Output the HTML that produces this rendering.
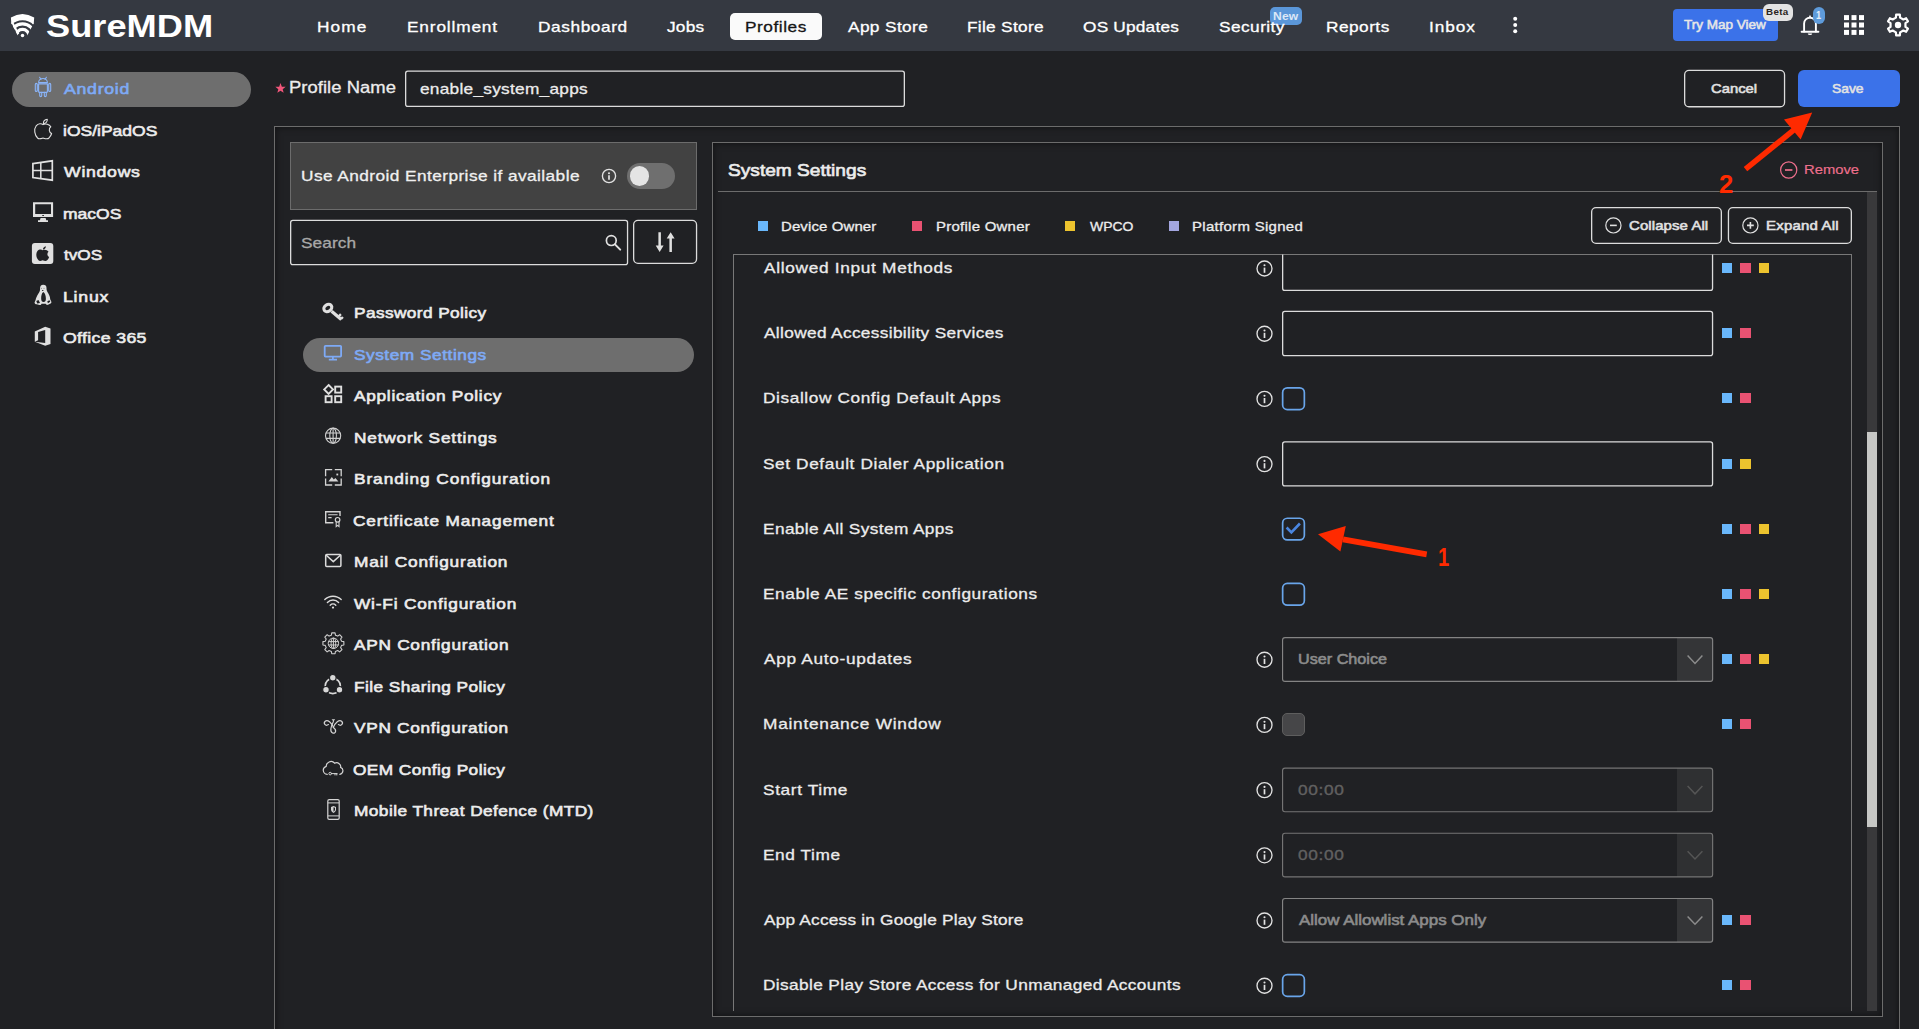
<!DOCTYPE html>
<html lang="en">
<head>
<meta charset="utf-8">
<title>SureMDM - Profiles</title>
<style>
html,body{margin:0;padding:0;}
body{width:1919px;height:1029px;overflow:hidden;position:relative;background:#202124;font-family:"Liberation Sans",sans-serif;}
.t{position:absolute;white-space:pre;line-height:20px;transform-origin:0 50%;display:block;}
.b{position:absolute;box-sizing:border-box;}
.hdr{left:0;top:0;width:1919px;height:51px;background:#353941;}
.pill{background:#6e6e6e;border-radius:18px;}
.blue{background:#3b72e9;}
.ob{border:1px solid #dcdcdc;}
.pan{border:1px solid #6c6c6c;box-shadow:inset 0 0 7px rgba(0,0,0,.55);}
.inp{border:1px solid #dedede;border-radius:3px;}
.sel{border:1px solid #8a8a8a;border-radius:3px;}
.sel i{position:absolute;right:0;top:0;bottom:0;width:35px;background:#343537;}
.sel.dis{border-color:#7a7a7a;}
.cb{width:23px;height:23px;border:1.5px solid #69a5ea;border-radius:5px;}
.cbd{width:23px;height:23px;border:1px solid #5e5e5e;border-radius:5px;background:#464648;}
.sq{position:absolute;width:10px;height:10px;}
.cB{background:#69b7fb;}.cP{background:#e95272;}.cY{background:#ecc32e;}.cV{background:#a3a6e0;}
svg{position:absolute;left:0;top:0;pointer-events:none;}
</style>
</head>
<body>
<div class="b hdr" style="left:0px;top:0px;width:1919px;height:51px;"></div>
<div class="b " style="left:730px;top:13px;width:92px;height:27px;background:#fafafa;border-radius:5px;"></div>
<div class="b " style="left:1269.5px;top:7px;width:32.5px;height:17.5px;background:#5b97d9;border-radius:5px;"></div>
<div class="b blue" style="left:1673px;top:9px;width:105px;height:32px;border-radius:4px;"></div>
<div class="b " style="left:1763px;top:4px;width:30px;height:16.8px;background:#e3e3e3;border-radius:6px;"></div>
<div class="b pill" style="left:12px;top:72px;width:239px;height:35px;"></div>
<div class="b blue" style="left:1798px;top:70px;width:102px;height:37px;border-radius:6px;"></div>
<div class="b pan" style="left:274px;top:126px;width:1626px;height:920px;"></div>
<div class="b " style="left:290px;top:142px;width:407px;height:68px;background:#424242;border:1px solid #6c6c6c;"></div>
<div class="b " style="left:627px;top:163px;width:48px;height:26px;background:#6f6f6f;border-radius:13px;"></div>
<div class="b " style="left:629.8px;top:166.2px;width:19.6px;height:19.6px;background:#e4e4e4;border-radius:50%;"></div>
<div class="b pill" style="left:303px;top:338px;width:391px;height:34px;"></div>
<div class="b pan" style="left:712px;top:142px;width:1171px;height:875px;"></div>
<div class="b " style="left:718px;top:191px;width:1159px;height:1px;background:#6c6c6c;"></div>
<div class="b " style="left:1867px;top:192px;width:10px;height:819px;background:#39393b;"></div>
<div class="b " style="left:1867px;top:432px;width:10px;height:395px;background:#c6c7c5;"></div>
<div class="sq cB" style="left:758px;top:221px"></div>
<div class="sq cP" style="left:912px;top:221px"></div>
<div class="sq cY" style="left:1065px;top:221px"></div>
<div class="sq cV" style="left:1168.5px;top:221px"></div>
<div class="b " style="left:733px;top:254px;width:1119px;height:757px;border:1px solid #787878;border-bottom:none;"></div>
<div class="sq cB" style="left:1722px;top:263px;width:10px"></div>
<div class="sq cP" style="left:1740px;top:263px;width:11px"></div>
<div class="sq cY" style="left:1759px;top:263px;width:10px"></div>
<div class="sq cB" style="left:1722px;top:328px;width:10px"></div>
<div class="sq cP" style="left:1740px;top:328px;width:11px"></div>
<div class="sq cB" style="left:1722px;top:393px;width:10px"></div>
<div class="sq cP" style="left:1740px;top:393px;width:11px"></div>
<div class="sq cB" style="left:1722px;top:459px;width:10px"></div>
<div class="sq cY" style="left:1740px;top:459px;width:11px"></div>
<div class="sq cB" style="left:1722px;top:524px;width:10px"></div>
<div class="sq cP" style="left:1740px;top:524px;width:11px"></div>
<div class="sq cY" style="left:1759px;top:524px;width:10px"></div>
<div class="sq cB" style="left:1722px;top:589px;width:10px"></div>
<div class="sq cP" style="left:1740px;top:589px;width:11px"></div>
<div class="sq cY" style="left:1759px;top:589px;width:10px"></div>
<div class="b " style="left:1677px;top:637.5px;width:35.5px;height:44px;background:#343537;border-radius:0 3px 3px 0;"></div>
<div class="sq cB" style="left:1722px;top:654px;width:10px"></div>
<div class="sq cP" style="left:1740px;top:654px;width:11px"></div>
<div class="sq cY" style="left:1759px;top:654px;width:10px"></div>
<div class="b cbd" style="left:1282px;top:713.4000000000001px;width:22.6px;height:22.6px;"></div>
<div class="sq cB" style="left:1722px;top:719px;width:10px"></div>
<div class="sq cP" style="left:1740px;top:719px;width:11px"></div>
<div class="b " style="left:1677px;top:767.9000000000001px;width:35.5px;height:44px;background:#2f3032;border-radius:0 3px 3px 0;"></div>
<div class="b " style="left:1677px;top:833.1000000000001px;width:35.5px;height:44px;background:#2f3032;border-radius:0 3px 3px 0;"></div>
<div class="b " style="left:1677px;top:898.3px;width:35.5px;height:44px;background:#343537;border-radius:0 3px 3px 0;"></div>
<div class="sq cB" style="left:1722px;top:915px;width:10px"></div>
<div class="sq cP" style="left:1740px;top:915px;width:11px"></div>
<div class="sq cB" style="left:1722px;top:980px;width:10px"></div>
<div class="sq cP" style="left:1740px;top:980px;width:11px"></div>
<svg width="1919" height="1029" viewBox="0 0 1919 1029">
<rect x="405.65" y="71.05" width="498.70" height="35.30" rx="2.15" fill="none" stroke="#dcdcdc" stroke-width="1.3" />
<rect x="1684.65" y="70.45" width="99.90" height="36.30" rx="4.35" fill="none" stroke="#dcdcdc" stroke-width="1.3" />
<rect x="290.65" y="220.45" width="336.90" height="44.10" rx="2.15" fill="none" stroke="#dcdcdc" stroke-width="1.3" />
<rect x="633.65" y="220.45" width="62.90" height="42.90" rx="4.35" fill="none" stroke="#dcdcdc" stroke-width="1.3" />
<rect x="1591.65" y="207.65" width="129.70" height="35.70" rx="4.35" fill="none" stroke="#dcdcdc" stroke-width="1.3" />
<rect x="1728.45" y="207.65" width="122.90" height="35.70" rx="4.35" fill="none" stroke="#dcdcdc" stroke-width="1.3" />
<path d="M1282.65,254.5V288.15a2.2,2.2 0 0 0 2.2,2.2H1710.35a2.2,2.2 0 0 0 2.2,-2.2V254.5" fill="none" stroke="#dcdcdc" stroke-width="1.3"/>
<rect x="1282.65" y="311.45" width="429.90" height="44.10" rx="2.15" fill="none" stroke="#dcdcdc" stroke-width="1.3" />
<rect x="1282.65" y="387.85" width="21.70" height="21.70" rx="4.65" fill="none" stroke="#69a5ea" stroke-width="1.7" />
<rect x="1282.65" y="441.85" width="429.90" height="44.10" rx="2.15" fill="none" stroke="#dcdcdc" stroke-width="1.3" />
<rect x="1282.65" y="518.25" width="21.70" height="21.70" rx="4.65" fill="none" stroke="#69a5ea" stroke-width="1.7" />
<rect x="1282.65" y="583.45" width="21.70" height="21.70" rx="4.65" fill="none" stroke="#69a5ea" stroke-width="1.7" />
<rect x="1282.58" y="637.68" width="430.05" height="43.65" rx="2.42" fill="none" stroke="#848484" stroke-width="1.15" />
<rect x="1282.58" y="768.08" width="430.05" height="43.65" rx="2.42" fill="none" stroke="#747474" stroke-width="1.15" />
<rect x="1282.58" y="833.28" width="430.05" height="43.65" rx="2.42" fill="none" stroke="#747474" stroke-width="1.15" />
<rect x="1282.58" y="898.48" width="430.05" height="43.65" rx="2.42" fill="none" stroke="#848484" stroke-width="1.15" />
<rect x="1282.65" y="974.65" width="21.70" height="21.70" rx="4.65" fill="none" stroke="#69a5ea" stroke-width="1.7" />
<defs><clipPath id="shield"><path d="M10.9,17.4Q22.5,10.4 34.2,17.4L33.8,23.2L27.4,35.2L17.6,35.2L11.3,23.2Z"/></clipPath></defs>
<g clip-path="url(#shield)" fill="none" stroke="#fff">
<circle cx="22.5" cy="36" r="21.2" stroke-width="11"/>
<circle cx="22.5" cy="36" r="12.1" stroke-width="3.2"/>
<circle cx="22.5" cy="36" r="6.6" stroke-width="3.3"/>
</g><path d="M11.2,22.6L13.3,22.2L19.2,33.4L17.6,34.8Z" fill="#fff"/><circle cx="22.5" cy="35.6" r="1.75" fill="#fff"/>
<circle cx="1515.2" cy="18.7" r="2" fill="#fff"/>
<circle cx="1515.2" cy="25" r="2" fill="#fff"/>
<circle cx="1515.2" cy="31.3" r="2" fill="#fff"/>
<g fill="none" stroke="#fff" stroke-width="1.9" stroke-linejoin="round" stroke-linecap="round">
<path d="M1804.1,31.6V23.6A5.9,5.9 0 0 1 1815.9,23.6V31.6"/><path d="M1801.6,31.7H1818.4"/></g><path d="M1808.3,17.9L1810,14.7L1811.7,17.9Z" fill="#fff"/>
<path d="M1807.8,33.4H1812.2A2.2,1.7 0 0 1 1807.8,33.4Z" fill="#fff"/>
<rect x="1844" y="15.1" width="5" height="5" fill="#fff"/>
<rect x="1844" y="22.5" width="5" height="5" fill="#fff"/>
<rect x="1844" y="29.9" width="5" height="5" fill="#fff"/>
<rect x="1851.5" y="15.1" width="5" height="5" fill="#fff"/>
<rect x="1851.5" y="22.5" width="5" height="5" fill="#fff"/>
<rect x="1851.5" y="29.9" width="5" height="5" fill="#fff"/>
<rect x="1859" y="15.1" width="5" height="5" fill="#fff"/>
<rect x="1859" y="22.5" width="5" height="5" fill="#fff"/>
<rect x="1859" y="29.9" width="5" height="5" fill="#fff"/>
<path d="M1895.91,17.59L1896.14,14.56L1899.86,14.56L1900.09,17.59L1903.37,19.48L1906.11,18.18L1907.97,21.39L1905.46,23.10L1905.46,26.90L1907.97,28.61L1906.11,31.82L1903.37,30.52L1900.09,32.41L1899.86,35.44L1896.14,35.44L1895.91,32.41L1892.63,30.52L1889.89,31.82L1888.03,28.61L1890.54,26.90L1890.54,23.10L1888.03,21.39L1889.89,18.18L1892.63,19.48Z" fill="none" stroke="#fff" stroke-width="2.2" stroke-linejoin="round"/><circle cx="1898" cy="25" r="3.2" fill="#fff"/>
<path d="M280.50,83.10L281.85,86.64L285.64,86.83L282.69,89.21L283.67,92.87L280.50,90.80L277.33,92.87L278.31,89.21L275.36,86.83L279.15,86.64Z" fill="#f0567a"/>
<g fill="none" stroke="#8ab4f8" stroke-width="1.1" stroke-linecap="round" stroke-linejoin="round">
<path d="M38.6,82.6A4.4,4.1 0 0 1 47.4,82.6Z"/><path d="M39.6,77.3L41,79.4M46.4,77.3L45,79.4"/>
<path d="M38.6,83.9H47.4V91.4A1,1 0 0 1 46.4,92.4H39.6A1,1 0 0 1 38.6,91.4Z"/>
<rect x="35.3" y="83.4" width="2" height="8" rx="1"/><rect x="48.7" y="83.4" width="2" height="8" rx="1"/>
<path d="M39.7,92.4V95.6A1,1 0 0 0 41.7,95.6V92.4M44.3,92.4V95.6A1,1 0 0 0 46.3,95.6V92.4"/></g>
<g fill="none" stroke="#e0e0e0" stroke-width="1.1" stroke-linejoin="round"><path d="M43,124.6C41.6,123.3 38.2,123.2 36.2,125.8C33.6,129.4 34.6,135 37.6,138C39.1,139.4 40.7,138.7 43,138C45.4,138.7 47.4,139.5 49,138C50.3,136.6 51.2,135 51.6,133.5C49,132.2 48.4,128.6 50.8,126.8C49.4,124.1 45.5,123.2 43,124.6Z"/><path d="M43.4,123.7C43.3,121.5 45,119.6 47.3,119.3C47.4,121.7 45.7,123.6 43.4,123.7Z"/></g>
<g fill="none" stroke="#e0e0e0" stroke-width="1.7" stroke-linejoin="miter"><path d="M32.9,163.6L52.3,160.8V180.2L32.9,177.6Z"/><path d="M40.8,162.4V178.8M32.9,170.5H52.3" stroke-width="1.5"/></g>
<path fill-rule="evenodd" fill="#e0e0e0" d="M33,202.2H53.1V217H33ZM35.2,204.3V213.9H51V204.3ZM42.3,215.1V215.9H43.9V215.1Z"/><path fill="#e0e0e0" d="M40.6,218.1H45.6L46.3,220.3H48V222H38V220.3H39.9Z"/>
<rect x="31.9" y="243" width="21.4" height="20.9" rx="3" fill="#e0e0e0"/>
<g transform="translate(42.6,253.9) scale(0.76) translate(-43,-129.5)" fill="#202124"><path d="M43,124.6C41.6,123.3 38.2,123.2 36.2,125.8C33.6,129.4 34.6,135 37.6,138C39.1,139.4 40.7,138.7 43,138C45.4,138.7 47.4,139.5 49,138C50.3,136.6 51.2,135 51.6,133.5C49,132.2 48.4,128.6 50.8,126.8C49.4,124.1 45.5,123.2 43,124.6Z"/><path d="M43.4,123.7C43.3,121.5 45,119.6 47.3,119.3C47.4,121.7 45.7,123.6 43.4,123.7Z"/></g>
<path fill="#e0e0e0" d="M43.2,284.8C41,284.8 40,286.3 40.1,288.5C40.2,290.5 39.5,291.8 38.3,293.8C36.8,296.2 35.8,298.5 35.6,300L34.6,302.2C34.3,303.5 35.5,304.2 36.8,304.3L39.5,305C40.5,305.2 41.3,304.6 41.5,303.8L45.6,303.8C46,304.8 47,305.2 48,304.8L50.6,303.4C51.6,302.8 51.6,301.8 51,301L50.2,299.2C50.2,296.5 48.8,294 47.6,292.2C46.6,290.7 46.5,289.5 46.5,288C46.5,286 45.4,284.8 43.2,284.8Z"/>
<path fill="#202124" d="M43.3,292C41.8,292.9 41,296 41.2,299C41.3,300.9 42,301.9 43.6,301.9C45.2,301.9 45.8,300.9 45.9,299C46,296 45,292.9 43.3,292Z"/>
<path fill="#202124" d="M36.3,300.9L38.5,300.1L40,303L37.2,303.4ZM47.3,301.2L49.5,300.2L50.3,301.8L47.9,303.2Z"/>
<ellipse cx="42.7" cy="290.5" rx="0.8" ry="0.55" fill="#202124"/><circle cx="41.5" cy="288.4" r="0.55" fill="#999"/><circle cx="44" cy="288.4" r="0.6" fill="#999"/>
<path fill="#e0e0e0" d="M34.8,331.4L45.2,326.7L50.5,328.4V344.1L45.2,345.8L34.8,341.7L45.2,343.1V329.9L38.1,331.9V340.2L34.8,341.7Z"/>
<g stroke="#e2e2e2" fill="none" stroke-width="1.35"><circle cx="609" cy="176.00" r="6.6"/><path d="M609,175.21V179.78" stroke-width="1.7"/></g><circle cx="609" cy="173.18" r="1.05" fill="#e2e2e2"/>
<g fill="none" stroke="#e0e0e0" stroke-width="1.7" stroke-linecap="round"><circle cx="611.3" cy="240.6" r="4.9"/><path d="M615,244.4L620.2,249.6" stroke-width="2"/></g>
<g fill="#e0e0e0"><path d="M658.4,232.2H660.9V245.6H663.6L659.65,252L655.7,245.6H658.4Z"/><path d="M669.4,252H671.9V238.6H674.6L670.65,232.2L666.7,238.6H669.4Z"/></g>
<g fill="none" stroke="#e0e0e0" stroke-linecap="round"><ellipse cx="327.8" cy="308" rx="4.3" ry="3.3" transform="rotate(-35 327.8 308)" stroke-width="3.1"/><path d="M331.6,311.3L341.3,319.5" stroke-width="3.3" stroke-linecap="butt"/><path d="M338.4,316.7L340.9,314.1M341,319.1L342.9,316.9" stroke-width="2.3" stroke-linecap="butt"/></g>
<g fill="none" stroke="#7eaaf6" stroke-width="1.8"><rect x="324.7" y="345.8" width="16.4" height="10.8" rx="0.8"/><path d="M332.9,357V359.4M328.8,359.7H337" /></g>
<g fill="none" stroke="#e0e0e0" stroke-width="1.9"><path d="M328.6,385L333,389.4L328.6,393.8L324.2,389.4Z"/><rect x="335.2" y="386.6" width="6" height="6"/><rect x="325.6" y="396.2" width="6" height="6"/><rect x="335.2" y="396.2" width="6" height="6"/></g>
<g fill="none" stroke="#cfcfcf" stroke-width="1.1"><circle cx="333.1" cy="435.7" r="7.6"/><ellipse cx="333.1" cy="435.7" rx="3.3" ry="7.6"/><path d="M333.1,428.1V443.3M326,433H340.2M326,438.4H340.2"/></g>
<g fill="none" stroke="#d4d4d4" stroke-width="1.3"><path d="M325.6,476.2V469.6H332.2M334.8,469.6H341.2V476.2M341.2,478.6V485H334.8M332.2,485H325.6V478.6"/></g><path d="M328.4,481.4L331.8,477L333.8,479.4L335.4,478L338.4,481.4Z" fill="#d4d4d4"/><rect x="336.4" y="473.6" width="1.8" height="1.8" fill="#d4d4d4"/>
<g fill="none" stroke="#d4d4d4" stroke-width="1.4"><path d="M333.4,522.8H325.7V511.8H340V516"/><path d="M328.2,514.8H337.6M328.2,517.6H331.6" stroke-width="1.1"/><circle cx="337.6" cy="519.8" r="2.3" stroke-width="1.2"/><path d="M336.2,522V526.6L337.6,525.4L339,526.6V522" stroke-width="1.1"/></g>
<g fill="none" stroke="#dcdcdc" stroke-width="1.5" stroke-linejoin="round"><rect x="325.7" y="554.4" width="15.2" height="12.2" rx="1"/><path d="M326,555L333.3,561.6L340.6,555"/></g>
<g fill="none" stroke="#dcdcdc" stroke-width="1.4" stroke-linecap="round"><path d="M324.8,599.6A11.6,11.6 0 0 1 341.2,599.6"/><path d="M327.4,602.4A7.9,7.9 0 0 1 338.6,602.4"/><path d="M330.2,605.2A4,4 0 0 1 335.8,605.2"/></g><circle cx="333" cy="607.6" r="1.1" fill="#dcdcdc"/>
<path d="M331.36,635.15L331.74,632.83L335.06,632.83L335.44,635.15L337.72,636.10L339.63,634.72L341.98,637.07L340.60,638.98L341.55,641.26L343.87,641.64L343.87,644.96L341.55,645.34L340.60,647.62L341.98,649.53L339.63,651.88L337.72,650.50L335.44,651.45L335.06,653.77L331.74,653.77L331.36,651.45L329.08,650.50L327.17,651.88L324.82,649.53L326.20,647.62L325.25,645.34L322.93,644.96L322.93,641.64L325.25,641.26L326.20,638.98L324.82,637.07L327.17,634.72L329.08,636.10Z" fill="none" stroke="#cfcfcf" stroke-width="1.1" stroke-linejoin="round"/><g fill="none" stroke="#cfcfcf" stroke-width="1"><circle cx="333.4" cy="643.3" r="5.2"/><ellipse cx="333.4" cy="643.3" rx="2.3" ry="5.2"/><path d="M333.4,638.1V648.5M328.4,641.6H338.4M328.4,645H338.4"/></g>
<circle cx="332.8" cy="686" r="7.6" fill="none" stroke="#d8d8d8" stroke-width="1.6"/><g fill="#d8d8d8" stroke="#202124" stroke-width="1.2"><circle cx="332.8" cy="677.8" r="3.3"/><circle cx="326" cy="689.8" r="3.3"/><circle cx="339.5" cy="689.8" r="3.3"/></g>
<g fill="none" stroke="#d4d4d4" stroke-width="1.2" stroke-linecap="round"><path d="M333.4,727.4C331.6,722.6 327.6,719.2 325.2,721.2C323,723.2 325.4,726.6 328.4,724.6"/><path d="M333.4,727.4C335.2,722.6 339.2,719.2 341.6,721.2C343.8,723.2 341.4,726.6 338.4,724.6"/><path d="M333.4,721.6C331,726.4 329.4,731.6 332.6,733C335.6,734 337.2,730.2 333.4,727.4"/></g><path d="M331.6,719.2H335.2L333.4,721.4Z" fill="#d4d4d4"/>
<g fill="none" stroke="#d4d4d4" stroke-width="1.2" stroke-linecap="round"><path d="M327.2,774.4C322.6,773.8 321.8,768 326.2,766.4C326,762.6 331.4,759.4 334.6,763.2C338,761.6 341.4,764.6 340.6,767.4C344,768.6 343.6,773.6 339.8,774.4"/><circle cx="330.2" cy="773.6" r="1.3" stroke-width="1"/><path d="M331.6,773.6H337M335,773.6V775M336.8,773.6V775" stroke-width="1"/></g>
<g fill="none" stroke="#d4d4d4" stroke-width="1.2"><rect x="327.8" y="799.6" width="11.4" height="19.8" rx="1.4"/><path d="M327.8,802.9H339.2M327.8,815.9H339.2" stroke-width="1"/></g><path d="M333.5,806L336,807V809.6C336,811.2 334.9,812.4 333.5,813C332.1,812.4 331,811.2 331,809.6V807Z" fill="#d4d4d4"/><path d="M333.5,807.2V811.8C334.4,811.3 335,810.5 335,809.5V807.8Z" fill="#202124"/>
<g fill="none" stroke="#ee6f8c" stroke-width="1.2"><circle cx="1788.7" cy="170" r="8.1"/><path d="M1785,170H1792.4" stroke-width="1.7"/></g>
<g fill="none" stroke="#e0e0e0" stroke-width="1.2"><circle cx="1613.4" cy="225.4" r="7.6"/><path d="M1610,225.4H1616.8" stroke-width="1.6"/><circle cx="1750.4" cy="225.4" r="7.6"/><path d="M1747,225.4H1753.8M1750.4,222V228.8" stroke-width="1.6"/></g>
<g stroke="#e2e2e2" fill="none" stroke-width="1.35"><circle cx="1264.5" cy="268.50" r="7.5"/><path d="M1264.5,267.60V272.80" stroke-width="1.7"/></g><circle cx="1264.5" cy="265.30" r="1.05" fill="#e2e2e2"/>
<g stroke="#e2e2e2" fill="none" stroke-width="1.35"><circle cx="1264.5" cy="333.70" r="7.5"/><path d="M1264.5,332.80V338.00" stroke-width="1.7"/></g><circle cx="1264.5" cy="330.50" r="1.05" fill="#e2e2e2"/>
<g stroke="#e2e2e2" fill="none" stroke-width="1.35"><circle cx="1264.5" cy="398.90" r="7.5"/><path d="M1264.5,398.00V403.20" stroke-width="1.7"/></g><circle cx="1264.5" cy="395.70" r="1.05" fill="#e2e2e2"/>
<g stroke="#e2e2e2" fill="none" stroke-width="1.35"><circle cx="1264.5" cy="464.10" r="7.5"/><path d="M1264.5,463.20V468.40" stroke-width="1.7"/></g><circle cx="1264.5" cy="460.90" r="1.05" fill="#e2e2e2"/>
<g stroke="#e2e2e2" fill="none" stroke-width="1.35"><circle cx="1264.5" cy="659.70" r="7.5"/><path d="M1264.5,658.80V664.00" stroke-width="1.7"/></g><circle cx="1264.5" cy="656.50" r="1.05" fill="#e2e2e2"/>
<g stroke="#e2e2e2" fill="none" stroke-width="1.35"><circle cx="1264.5" cy="724.90" r="7.5"/><path d="M1264.5,724.00V729.20" stroke-width="1.7"/></g><circle cx="1264.5" cy="721.70" r="1.05" fill="#e2e2e2"/>
<g stroke="#e2e2e2" fill="none" stroke-width="1.35"><circle cx="1264.5" cy="790.10" r="7.5"/><path d="M1264.5,789.20V794.40" stroke-width="1.7"/></g><circle cx="1264.5" cy="786.90" r="1.05" fill="#e2e2e2"/>
<g stroke="#e2e2e2" fill="none" stroke-width="1.35"><circle cx="1264.5" cy="855.30" r="7.5"/><path d="M1264.5,854.40V859.60" stroke-width="1.7"/></g><circle cx="1264.5" cy="852.10" r="1.05" fill="#e2e2e2"/>
<g stroke="#e2e2e2" fill="none" stroke-width="1.35"><circle cx="1264.5" cy="920.50" r="7.5"/><path d="M1264.5,919.60V924.80" stroke-width="1.7"/></g><circle cx="1264.5" cy="917.30" r="1.05" fill="#e2e2e2"/>
<g stroke="#e2e2e2" fill="none" stroke-width="1.35"><circle cx="1264.5" cy="985.70" r="7.5"/><path d="M1264.5,984.80V990.00" stroke-width="1.7"/></g><circle cx="1264.5" cy="982.50" r="1.05" fill="#e2e2e2"/>
<path d="M1687.6,655.6L1695,663.4L1702.4,655.6" fill="none" stroke="#8c8c8c" stroke-width="1.5"/>
<path d="M1687.6,786.0L1695,793.8L1702.4,786.0" fill="none" stroke="#555" stroke-width="1.5"/>
<path d="M1687.6,851.2L1695,859.0L1702.4,851.2" fill="none" stroke="#555" stroke-width="1.5"/>
<path d="M1687.6,916.4L1695,924.2L1702.4,916.4" fill="none" stroke="#8c8c8c" stroke-width="1.5"/>
<path d="M1286.6,527.5L1291.4,532.4L1299.9,523.5" fill="none" stroke="#4a86e0" stroke-width="2.6"/>
<path d="M1426.7,554.4L1343,539.3" stroke="#ff2a00" stroke-width="5.8" fill="none"/><path d="M1318,534.2L1345.8,526L1340.4,551.6Z" fill="#ff2a00"/>
<path d="M1745.5,169.2L1794.8,129.2" stroke="#ff2a00" stroke-width="5.6" fill="none"/><path d="M1812.2,112.4L1784,119.4L1800.6,139.4Z" fill="#ff2a00"/>
</svg>
<div class="b " style="left:1813px;top:7px;width:12.2px;height:17px;background:#5e9bdb;border-radius:6px;"></div>
<span class="t" style="left:46.00px;top:16.11px;font-size:32px;color:#ffffff;transform:scaleX(1.1328);font-weight:700;">SureMDM</span>
<span class="t" style="left:317.00px;top:16.80px;font-size:15px;color:#ffffff;transform:scaleX(1.1500);letter-spacing:0.961px;-webkit-text-stroke:0.3px #ffffff;">Home</span>
<span class="t" style="left:406.50px;top:16.80px;font-size:15px;color:#ffffff;transform:scaleX(1.1500);letter-spacing:0.734px;-webkit-text-stroke:0.3px #ffffff;">Enrollment</span>
<span class="t" style="left:537.70px;top:16.80px;font-size:15px;color:#ffffff;transform:scaleX(1.1500);letter-spacing:0.513px;-webkit-text-stroke:0.3px #ffffff;">Dashboard</span>
<span class="t" style="left:666.79px;top:16.80px;font-size:15px;color:#ffffff;transform:scaleX(1.1500);letter-spacing:0.197px;-webkit-text-stroke:0.3px #ffffff;">Jobs</span>
<span class="t" style="left:847.66px;top:16.80px;font-size:15px;color:#ffffff;transform:scaleX(1.1500);letter-spacing:0.333px;-webkit-text-stroke:0.3px #ffffff;">App Store</span>
<span class="t" style="left:967.00px;top:16.80px;font-size:15px;color:#ffffff;transform:scaleX(1.1500);letter-spacing:0.262px;-webkit-text-stroke:0.3px #ffffff;">File Store</span>
<span class="t" style="left:1083.40px;top:16.80px;font-size:15px;color:#ffffff;transform:scaleX(1.1500);letter-spacing:0.181px;-webkit-text-stroke:0.3px #ffffff;">OS Updates</span>
<span class="t" style="left:1219.25px;top:16.80px;font-size:15px;color:#ffffff;transform:scaleX(1.1500);letter-spacing:0.394px;-webkit-text-stroke:0.3px #ffffff;">Security</span>
<span class="t" style="left:1326.00px;top:16.80px;font-size:15px;color:#ffffff;transform:scaleX(1.1500);letter-spacing:0.414px;-webkit-text-stroke:0.3px #ffffff;">Reports</span>
<span class="t" style="left:1429.29px;top:16.80px;font-size:15px;color:#ffffff;transform:scaleX(1.1500);letter-spacing:0.785px;-webkit-text-stroke:0.3px #ffffff;">Inbox</span>
<span class="t" style="left:745.00px;top:16.80px;font-size:15px;color:#151515;transform:scaleX(1.1500);letter-spacing:0.478px;-webkit-text-stroke:0.3px #151515;">Profiles</span>
<span class="t" style="left:1272.75px;top:5.82px;font-size:10.5px;color:#dbe8f7;transform:scaleX(1.1500);font-weight:700;letter-spacing:0.136px;">New</span>
<span class="t" style="left:1684.19px;top:14.87px;font-size:12px;color:#e6e6e6;transform:scaleX(1.1249);-webkit-text-stroke:0.5px #e6e6e6;">Try Map View</span>
<span class="t" style="left:1766.29px;top:1.87px;font-size:8.5px;color:#2a2420;transform:scaleX(1.1500);font-weight:700;letter-spacing:0.322px;">Beta</span>
<span class="t" style="left:1816.17px;top:5.17px;font-size:11px;color:#e4eefa;transform:scaleX(0.8403);font-weight:700;">1</span>
<span class="t" style="left:288.95px;top:78.46px;font-size:16px;color:#ececec;transform:scaleX(1.1500);letter-spacing:0.046px;-webkit-text-stroke:0.3px #ececec;">Profile Name</span>
<span class="t" style="left:420.16px;top:78.80px;font-size:15px;color:#ececec;transform:scaleX(1.1500);letter-spacing:0.236px;-webkit-text-stroke:0.3px #ececec;">enable_system_apps</span>
<span class="t" style="left:1711.30px;top:78.56px;font-size:13px;color:#e2e2e2;transform:scaleX(1.1393);-webkit-text-stroke:0.55px #e2e2e2;">Cancel</span>
<span class="t" style="left:1832.44px;top:78.53px;font-size:13px;color:#e2e2e2;transform:scaleX(1.0655);-webkit-text-stroke:0.55px #e2e2e2;">Save</span>
<span class="t" style="left:63.68px;top:78.66px;font-size:15.4px;color:#7eaaf6;transform:scaleX(1.1500);letter-spacing:0.621px;-webkit-text-stroke:0.6px #7eaaf6;">Android</span>
<span class="t" style="left:62.90px;top:121.16px;font-size:15.4px;color:#ececec;transform:scaleX(1.1373);-webkit-text-stroke:0.6px #ececec;">iOS/iPadOS</span>
<span class="t" style="left:63.90px;top:161.66px;font-size:15.4px;color:#ececec;transform:scaleX(1.1500);letter-spacing:0.604px;-webkit-text-stroke:0.6px #ececec;">Windows</span>
<span class="t" style="left:62.89px;top:204.16px;font-size:15.4px;color:#ececec;transform:scaleX(1.1361);-webkit-text-stroke:0.6px #ececec;">macOS</span>
<span class="t" style="left:63.86px;top:244.66px;font-size:15.4px;color:#ececec;transform:scaleX(1.1168);-webkit-text-stroke:0.6px #ececec;">tvOS</span>
<span class="t" style="left:62.67px;top:287.16px;font-size:15.4px;color:#ececec;transform:scaleX(1.1500);letter-spacing:0.667px;-webkit-text-stroke:0.6px #ececec;">Linux</span>
<span class="t" style="left:63.14px;top:327.66px;font-size:15.4px;color:#ececec;transform:scaleX(1.1500);letter-spacing:0.299px;-webkit-text-stroke:0.6px #ececec;">Office 365</span>
<span class="t" style="left:300.96px;top:165.80px;font-size:15px;color:#f0f0f0;transform:scaleX(1.1500);letter-spacing:0.379px;-webkit-text-stroke:0.3px #f0f0f0;">Use Android Enterprise if available</span>
<span class="t" style="left:300.75px;top:233.00px;font-size:15px;color:#a8a8a8;transform:scaleX(1.1500);letter-spacing:0.095px;-webkit-text-stroke:0.3px #a8a8a8;">Search</span>
<span class="t" style="left:353.62px;top:302.80px;font-size:15px;color:#ececec;transform:scaleX(1.1500);letter-spacing:0.351px;-webkit-text-stroke:0.6px #ececec;">Password Policy</span>
<span class="t" style="left:353.98px;top:344.80px;font-size:15px;color:#7eaaf6;transform:scaleX(1.1500);letter-spacing:0.466px;-webkit-text-stroke:0.6px #7eaaf6;">System Settings</span>
<span class="t" style="left:354.08px;top:385.80px;font-size:15px;color:#ececec;transform:scaleX(1.1500);letter-spacing:0.623px;-webkit-text-stroke:0.6px #ececec;">Application Policy</span>
<span class="t" style="left:353.62px;top:427.80px;font-size:15px;color:#ececec;transform:scaleX(1.1500);letter-spacing:0.713px;-webkit-text-stroke:0.6px #ececec;">Network Settings</span>
<span class="t" style="left:353.60px;top:468.80px;font-size:15px;color:#ececec;transform:scaleX(1.1500);letter-spacing:0.814px;-webkit-text-stroke:0.6px #ececec;">Branding Configuration</span>
<span class="t" style="left:353.33px;top:510.80px;font-size:15px;color:#ececec;transform:scaleX(1.1500);letter-spacing:0.731px;-webkit-text-stroke:0.6px #ececec;">Certificate Management</span>
<span class="t" style="left:353.62px;top:551.80px;font-size:15px;color:#ececec;transform:scaleX(1.1500);letter-spacing:0.737px;-webkit-text-stroke:0.6px #ececec;">Mail Configuration</span>
<span class="t" style="left:354.10px;top:593.80px;font-size:15px;color:#ececec;transform:scaleX(1.1500);letter-spacing:0.706px;-webkit-text-stroke:0.6px #ececec;">Wi-Fi Configuration</span>
<span class="t" style="left:354.08px;top:634.80px;font-size:15px;color:#ececec;transform:scaleX(1.1500);letter-spacing:0.633px;-webkit-text-stroke:0.6px #ececec;">APN Configuration</span>
<span class="t" style="left:353.62px;top:676.80px;font-size:15px;color:#ececec;transform:scaleX(1.1500);letter-spacing:0.382px;-webkit-text-stroke:0.6px #ececec;">File Sharing Policy</span>
<span class="t" style="left:354.08px;top:717.80px;font-size:15px;color:#ececec;transform:scaleX(1.1500);letter-spacing:0.611px;-webkit-text-stroke:0.6px #ececec;">VPN Configuration</span>
<span class="t" style="left:353.38px;top:759.80px;font-size:15px;color:#ececec;transform:scaleX(1.1500);letter-spacing:0.388px;-webkit-text-stroke:0.6px #ececec;">OEM Config Policy</span>
<span class="t" style="left:353.62px;top:800.80px;font-size:15px;color:#ececec;transform:scaleX(1.1500);letter-spacing:0.384px;-webkit-text-stroke:0.6px #ececec;">Mobile Threat Defence (MTD)</span>
<span class="t" style="left:727.81px;top:161.11px;font-size:17px;color:#ececec;transform:scaleX(1.1252);-webkit-text-stroke:0.65px #ececec;">System Settings</span>
<span class="t" style="left:1804.35px;top:160.33px;font-size:13px;color:#ee6f8c;transform:scaleX(1.1370);-webkit-text-stroke:0.15px #ee6f8c;">Remove</span>
<span class="t" style="left:781.35px;top:216.73px;font-size:13px;color:#ececec;transform:scaleX(1.1500);letter-spacing:0.108px;-webkit-text-stroke:0.3px #ececec;">Device Owner</span>
<span class="t" style="left:935.85px;top:216.73px;font-size:13px;color:#ececec;transform:scaleX(1.1500);letter-spacing:0.229px;-webkit-text-stroke:0.3px #ececec;">Profile Owner</span>
<span class="t" style="left:1090.14px;top:216.70px;font-size:13px;color:#ececec;transform:scaleX(1.0747);-webkit-text-stroke:0.3px #ececec;">WPCO</span>
<span class="t" style="left:1192.45px;top:216.73px;font-size:13px;color:#ececec;transform:scaleX(1.1500);letter-spacing:0.273px;-webkit-text-stroke:0.3px #ececec;">Platform Signed</span>
<span class="t" style="left:1628.79px;top:215.56px;font-size:13px;color:#e2e2e2;transform:scaleX(1.1500);letter-spacing:0.085px;-webkit-text-stroke:0.55px #e2e2e2;">Collapse All</span>
<span class="t" style="left:1765.53px;top:215.50px;font-size:13px;color:#e2e2e2;transform:scaleX(1.1500);letter-spacing:0.192px;-webkit-text-stroke:0.55px #e2e2e2;">Expand All</span>
<span class="t" style="left:763.86px;top:257.80px;font-size:15px;color:#ececec;transform:scaleX(1.1500);letter-spacing:0.605px;-webkit-text-stroke:0.3px #ececec;">Allowed Input Methods</span>
<span class="t" style="left:763.86px;top:322.80px;font-size:15px;color:#ececec;transform:scaleX(1.1500);letter-spacing:0.304px;-webkit-text-stroke:0.3px #ececec;">Allowed Accessibility Services</span>
<span class="t" style="left:762.70px;top:388.40px;font-size:15px;color:#ececec;transform:scaleX(1.1500);letter-spacing:0.520px;-webkit-text-stroke:0.3px #ececec;">Disallow Config Default Apps</span>
<span class="t" style="left:762.95px;top:453.80px;font-size:15px;color:#ececec;transform:scaleX(1.1500);letter-spacing:0.527px;-webkit-text-stroke:0.3px #ececec;">Set Default Dialer Application</span>
<span class="t" style="left:762.70px;top:519.00px;font-size:15px;color:#ececec;transform:scaleX(1.1500);letter-spacing:0.342px;-webkit-text-stroke:0.3px #ececec;">Enable All System Apps</span>
<span class="t" style="left:762.70px;top:583.80px;font-size:15px;color:#ececec;transform:scaleX(1.1500);letter-spacing:0.518px;-webkit-text-stroke:0.3px #ececec;">Enable AE specific configurations</span>
<span class="t" style="left:763.86px;top:648.80px;font-size:15px;color:#ececec;transform:scaleX(1.1500);letter-spacing:0.605px;-webkit-text-stroke:0.3px #ececec;">App Auto-updates</span>
<span class="t" style="left:762.70px;top:714.40px;font-size:15px;color:#ececec;transform:scaleX(1.1500);letter-spacing:0.658px;-webkit-text-stroke:0.3px #ececec;">Maintenance Window</span>
<span class="t" style="left:762.95px;top:779.80px;font-size:15px;color:#ececec;transform:scaleX(1.1500);letter-spacing:0.549px;-webkit-text-stroke:0.3px #ececec;">Start Time</span>
<span class="t" style="left:762.70px;top:845.00px;font-size:15px;color:#ececec;transform:scaleX(1.1500);letter-spacing:0.518px;-webkit-text-stroke:0.3px #ececec;">End Time</span>
<span class="t" style="left:763.86px;top:909.80px;font-size:15px;color:#ececec;transform:scaleX(1.1500);letter-spacing:0.181px;-webkit-text-stroke:0.3px #ececec;">App Access in Google Play Store</span>
<span class="t" style="left:762.70px;top:974.80px;font-size:15px;color:#ececec;transform:scaleX(1.1500);letter-spacing:0.327px;-webkit-text-stroke:0.3px #ececec;">Disable Play Store Access for Unmanaged Accounts</span>
<span class="t" style="left:1297.72px;top:649.43px;font-size:15px;color:#8c8c8c;transform:scaleX(1.0781);-webkit-text-stroke:0.6px #8c8c8c;">User Choice</span>
<span class="t" style="left:1297.87px;top:779.60px;font-size:15px;color:#606060;transform:scaleX(1.1500);letter-spacing:0.566px;-webkit-text-stroke:0.4px #606060;">00:00</span>
<span class="t" style="left:1297.87px;top:845.30px;font-size:15px;color:#606060;transform:scaleX(1.1500);letter-spacing:0.566px;-webkit-text-stroke:0.4px #606060;">00:00</span>
<span class="t" style="left:1298.77px;top:910.26px;font-size:15px;color:#8c8c8c;transform:scaleX(1.1278);-webkit-text-stroke:0.6px #8c8c8c;">Allow Allowlist Apps Only</span>
<span class="t" style="left:1438.05px;top:546.79px;font-size:26px;color:#ff2a00;transform:scaleX(0.7777);font-weight:700;">1</span>
<span class="t" style="left:1719.22px;top:174.34px;font-size:26px;color:#ff2a00;transform:scaleX(0.9859);font-weight:700;">2</span>
</body>
</html>
